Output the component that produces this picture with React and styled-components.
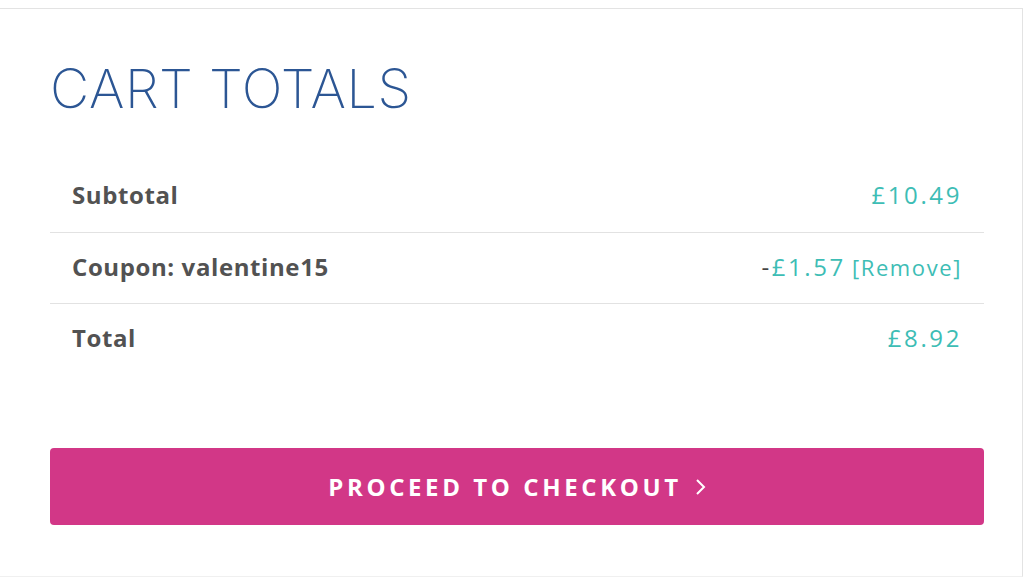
import styled, { createGlobalStyle } from 'styled-components';

const GlobalStyle = createGlobalStyle`
  html, body {
    margin: 0;
    padding: 0;
    background: #fff;
  }
  body {
    font-family: "Open Sans", "Liberation Sans", sans-serif;
  }
`;

const Card = styled.div`
  box-sizing: border-box;
  margin-top: 8px;
  width: 1023px;
  height: 569px;
  border-top: 1px solid #e3e3e3;
  border-right: 1px solid #e3e3e3;
  border-bottom: 1px solid #f0f0f0;
  padding: 48px 38px 0 50px;
`;

const Title = styled.h2`
  margin: 0;
  font-family: "Inter", "Lato", sans-serif;
  font-weight: 200;
  font-size: 54px;
  line-height: 64px;
  letter-spacing: 0.5px;
  color: #2c5694;
`;

const Table = styled.div`
  margin-top: 40px;
  display: flex;
  flex-direction: column;
`;

const Row = styled.div`
  box-sizing: border-box;
  display: flex;
  justify-content: space-between;
  align-items: center;
  height: 71px;
  padding: 0 22px 4px;
  border-top: ${(props) => (props.$first ? 'none' : '1px solid #e2e2e2')};
`;

const Label = styled.span`
  font-family: "Open Sans", sans-serif;
  font-weight: 700;
  font-size: 24px;
  letter-spacing: 0.6px;
  color: #525252;
`;

const Value = styled.span`
  font-family: "Open Sans", sans-serif;
  font-size: 24px;
  letter-spacing: 2.6px;
  color: #3dbdb5;
`;

const Minus = styled.span`
  color: #444;
`;

const RemoveLink = styled.a`
  font-size: 22px;
  letter-spacing: 1.6px;
  color: #3dbdb5;
  margin-left: 6px;
  text-decoration: none;
  cursor: pointer;
`;

const CheckoutButton = styled.button`
  margin-top: 74px;
  width: 100%;
  height: 77px;
  border: none;
  border-radius: 4px;
  background: #d23787;
  color: #fff;
  font-family: "Open Sans", sans-serif;
  font-weight: 700;
  font-size: 24px;
  letter-spacing: 3.6px;
  display: flex;
  justify-content: center;
  align-items: center;
  gap: 12px;
  cursor: pointer;
`;

const Chevron = styled.svg`
  width: 12px;
  height: 18px;
`;

export default function App() {
  return (
    <>
      <GlobalStyle />
      <Card>
        <Title>CART TOTALS</Title>
        <Table>
          <Row $first>
            <Label>Subtotal</Label>
            <Value>£10.49</Value>
          </Row>
          <Row>
            <Label>Coupon: valentine15</Label>
            <Value>
              <Minus>-</Minus>£1.57
              <RemoveLink>[Remove]</RemoveLink>
            </Value>
          </Row>
          <Row>
            <Label>Total</Label>
            <Value>£8.92</Value>
          </Row>
        </Table>
        <CheckoutButton>
          PROCEED TO CHECKOUT
          <Chevron viewBox="0 0 12 18">
            <path d="M3 2 L10 9 L3 16" fill="none" stroke="#fff" strokeWidth="2" />
          </Chevron>
        </CheckoutButton>
      </Card>
    </>
  );
}
